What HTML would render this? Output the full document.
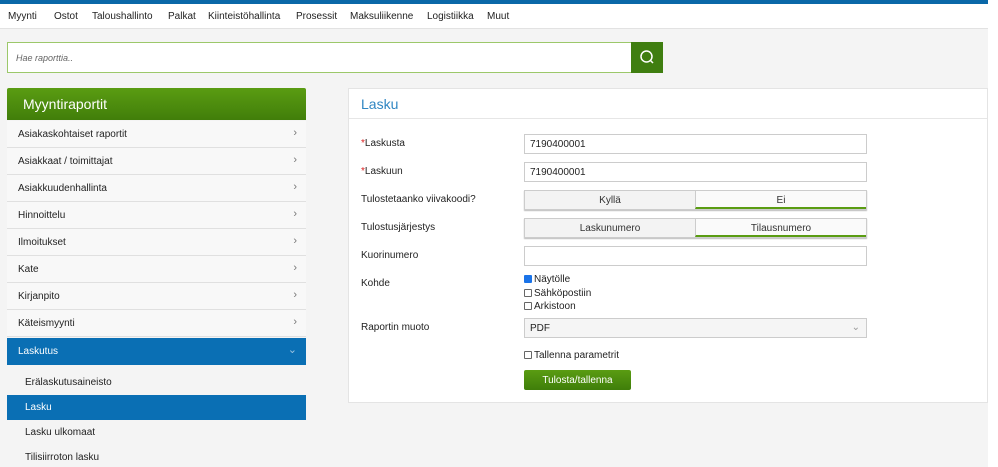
<!DOCTYPE html>
<html><head><meta charset="utf-8"><style>
*{box-sizing:border-box;margin:0;padding:0}
html{overflow:hidden}
body{width:998px;height:467px;overflow:hidden;background:#fff;font-family:"Liberation Sans",sans-serif;font-size:10px;color:#333;position:relative}
.a{position:absolute}
#bg{left:0;top:29px;width:988px;height:450px;background:#f4f4f4}
#top{left:0;top:0;width:988px;height:4px;background:#0a68a8}
#nav{left:0;top:4px;width:988px;height:25px;background:#fff;border-bottom:1px solid #e2e2e2}
#nav span{position:absolute;top:7px;font-size:10px;color:#222}
#search{left:7px;top:42px;width:625px;height:31px;background:#fff;border:1px solid #9cc86a;border-right:none}
#search i{position:absolute;left:8px;top:10px;font-size:9px;color:#666}
#sbtn{left:631px;top:42px;width:32px;height:31px;background:#3f7e10}
#side{left:7px;top:88px;width:299px;height:379px;overflow:hidden}
#sh{height:32px;background:linear-gradient(#5a9c12,#417e0a);color:#fff;font-size:14px;padding:8px 0 0 16px;border-radius:2px 2px 0 0}
.it{height:27px;border-bottom:1px solid #e0e0e0;background:#f8f8f8;padding:8px 0 0 11px;font-size:10px;color:#222;position:relative}
.it b{position:absolute;right:9px;top:6px;font-weight:normal;color:#777;font-size:11px}
.sub{height:25px;background:#f4f4f4;padding:7px 0 0 18px;font-size:10px;color:#222}
.it.blue,.sub.blue{background:#0a6fb4;color:#fff}
#panel{left:348px;top:88px;width:640px;height:315px;background:#fff;border:1px solid #e4e4e4}
#ph{height:30px;border-bottom:1px solid #e6e6e6;font-size:14px;color:#2f86c2;padding:7px 0 0 12px}
.lb{position:absolute;left:12px;font-size:10px;color:#222}
.lb em{color:#d22;font-style:normal}
.inp{position:absolute;left:175px;width:343px;height:20px;border:1px solid #ccc;background:#fff;padding:4px 0 0 5px;font-size:10px;color:#222}
.tg{position:absolute;left:175px;width:343px;height:20px;display:flex;border:1px solid #ccc;box-shadow:0 1px 1px #bbb}
.tg div{flex:1;text-align:center;padding-top:4px;background:#f3f3f3;font-size:10px}
.tg div.on{background:#fafafa;border-bottom:2px solid #5a9c12;border-left:1px solid #ccc}
.cb{position:absolute;left:175px;font-size:10px;color:#222}
.cb s{display:inline-block;width:8px;height:8px;border:1px solid #666;border-radius:1px;vertical-align:-1px;margin-right:2px;text-decoration:none}
.cb s.c{background:#1a73e8;border-color:#1a73e8}
</style></head><body>
<div class="a" id="bg"></div>
<div class="a" id="top"></div>
<div class="a" id="nav">
<span style="left:8px">Myynti</span><span style="left:54px">Ostot</span><span style="left:92px">Taloushallinto</span><span style="left:168px">Palkat</span><span style="left:208px">Kiinteistöhallinta</span><span style="left:296px">Prosessit</span><span style="left:350px">Maksuliikenne</span><span style="left:427px">Logistiikka</span><span style="left:487px">Muut</span>
</div>
<div class="a" id="search"><i>Hae raporttia..</i></div>
<div class="a" id="sbtn"><svg width="32" height="31"><circle cx="15.5" cy="14.5" r="5.5" fill="none" stroke="#fff" stroke-width="1.5"/><line x1="19.5" y1="18.5" x2="22" y2="21" stroke="#fff" stroke-width="1.5"/></svg></div>
<div class="a" id="side">
<div id="sh">Myyntiraportit</div>
<div class="it" style="margin-top:1px">Asiakaskohtaiset raportit<b>›</b></div>
<div class="it">Asiakkaat / toimittajat<b>›</b></div>
<div class="it">Asiakkuudenhallinta<b>›</b></div>
<div class="it">Hinnoittelu<b>›</b></div>
<div class="it">Ilmoitukset<b>›</b></div>
<div class="it">Kate<b>›</b></div>
<div class="it">Kirjanpito<b>›</b></div>
<div class="it">Käteismyynti<b>›</b></div>
<div class="it blue" style="border-bottom:none;margin-top:1px">Laskutus<b style="color:#9cc3e0;top:5px">⌄</b></div>
<div class="sub" style="margin-top:5px">Erälaskutusaineisto</div>
<div class="sub blue">Lasku</div>
<div class="sub">Lasku ulkomaat</div>
<div class="sub">Tilisiirroton lasku</div>
</div>
<div class="a" id="panel">
<div id="ph">Lasku</div>
<div class="lb" style="top:49px"><em>*</em>Laskusta</div><div class="inp" style="top:45px">7190400001</div>
<div class="lb" style="top:77px"><em>*</em>Laskuun</div><div class="inp" style="top:73px">7190400001</div>
<div class="lb" style="top:105px">Tulostetaanko viivakoodi?</div><div class="tg" style="top:101px"><div>Kyllä</div><div class="on">Ei</div></div>
<div class="lb" style="top:133px">Tulostusjärjestys</div><div class="tg" style="top:129px"><div>Laskunumero</div><div class="on">Tilausnumero</div></div>
<div class="lb" style="top:161px">Kuorinumero</div><div class="inp" style="top:157px"></div>
<div class="lb" style="top:189px">Kohde</div>
<div class="cb" style="top:185px"><s class="c"></s>Näytölle</div>
<div class="cb" style="top:199px"><s></s>Sähköpostiin</div>
<div class="cb" style="top:212px"><s></s>Arkistoon</div>
<div class="lb" style="top:233px">Raportin muoto</div><div class="inp" style="top:229px;background:#f5f5f5">PDF<span style="position:absolute;right:6px;top:3px;color:#999">⌄</span></div>
<div class="cb" style="top:261px"><s></s>Tallenna parametrit</div>
<div class="a" style="left:175px;top:281px;width:107px;height:20px;background:linear-gradient(#5a9c12,#3f7e0a);border-radius:2px;color:#fff;text-align:center;padding-top:5px;font-size:10px">Tulosta/tallenna</div>
</div>
</body></html>
